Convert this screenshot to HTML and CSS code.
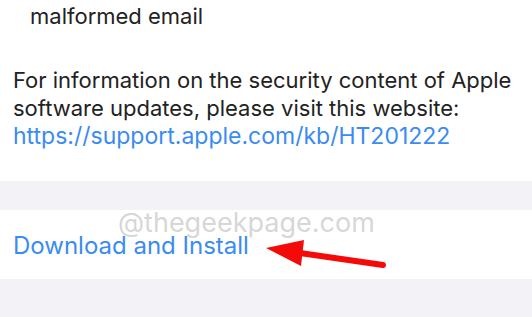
FILE: index.html
```html
<!DOCTYPE html>
<html>
<head>
<meta charset="utf-8">
<link rel="stylesheet" href="styles.css">
</head>
<body>
<div class="screen">
  <section class="notes">
    <p class="item">malformed email</p>
    <p class="info">For information on the security content of Apple<br>software updates, please visit this website:<br><span class="link url">https://support.apple.com/kb/HT201222</span></p>
  </section>
  <div class="gap"></div>
  <section class="action">
    <span class="link">Download and Install</span>
  </section>
  <div class="footer"></div>
  <div class="watermark">@thegeekpage.com</div>
  <svg class="arrow" width="532" height="317" viewBox="0 0 532 317">
    <path d="M383 265 L300 253" stroke="#f50a0a" stroke-width="6" stroke-linecap="round" fill="none"/>
    <path d="M266 248 L304 240 L301 266 Z" fill="#f50a0a"/>
  </svg>
</div>
</body>
</html>
```
FILE: styles.css
```css
* { box-sizing: border-box; }
html, body { margin: 0; padding: 0; }
body { width: 532px; height: 317px; overflow: hidden; background: #fff; font-family: Inter, "Liberation Sans", sans-serif; }
.screen { position: relative; width: 532px; height: 317px; display: flex; flex-direction: column; }
.notes { height: 181px; background: #fff; padding: 0 0 0 13px; }
.item { margin: 0; padding: 4px 0 0 17px; font-size: 22px; line-height: 25px; color: #222; }
.info { margin: 37px 0 0; font-size: 22px; line-height: 28px; color: #222; white-space: nowrap; }
.link { color: #3a8bf2; }
.url { font-size: 23px; }
.gap { height: 29px; background: #f2f2f7; }
.action { height: 69px; background: #fff; padding: 22px 13px 0; font-size: 24px; line-height: 28px; }
.footer { flex: 1; background: #f2f2f7; }
.watermark { position: absolute; left: 118px; top: 206px; font-size: 27px; color: rgba(150,150,150,0.4); }
.arrow { position: absolute; left: 0; top: 0; }
```
